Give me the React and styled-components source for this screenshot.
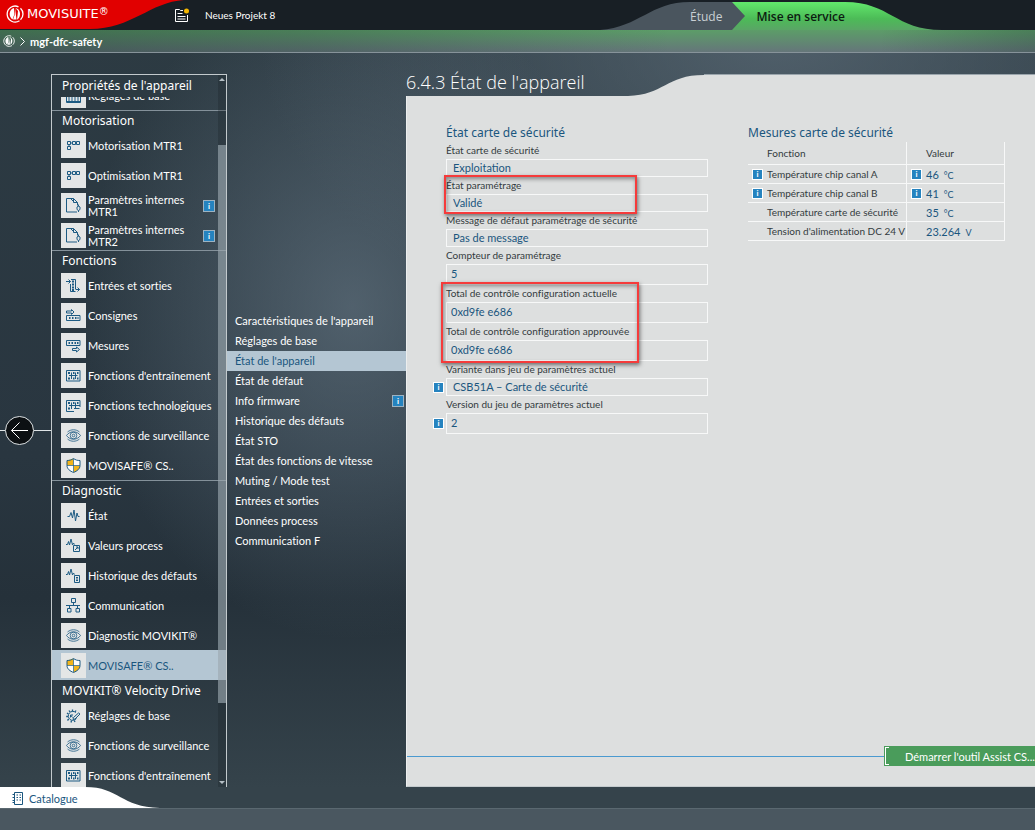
import React, { useState } from "react";
import styled, { createGlobalStyle, css } from "styled-components";

const GlobalStyle = createGlobalStyle`
  *,
  *::before,
  *::after {
    box-sizing: border-box;
  }

  body {
    margin: 0;
    font-family: Lato, "Open Sans", sans-serif;
    font-size: 11px;
    font-variant-ligatures: none;
    color: #ffffff;
    background: #2b3840;
  }

  button,
  input {
    font-family: inherit;
  }
`;

const Page = styled.div`
  display: flex;
  flex-direction: column;
  height: 100vh;
  overflow: hidden;
  background:
    radial-gradient(ellipse 26% 40% at 34% 37%, rgba(112, 130, 144, 0.55), transparent),
    radial-gradient(ellipse 50% 40% at 75% 4%, rgba(92, 108, 120, 0.75), transparent),
    linear-gradient(180deg, #2d3b43 0%, #293640 55%, #25313a 72%, #35434b 95%);
`;

const TopBar = styled.header`
  display: flex;
  align-items: center;
  height: 30px;
  background: #181f25;
`;

const Brand = styled.div`
  position: relative;
  display: flex;
  align-items: center;
  gap: 3px;
  width: 174px;
  height: 30px;
  padding-left: 6px;
  padding-bottom: 3px;
`;

const BrandShape = styled.svg`
  position: absolute;
  top: 0;
  left: 0;
`;

const BrandName = styled.span`
  position: relative;
  font-family: "DejaVu Sans", sans-serif;
  font-size: 13px;
  line-height: 16px;

  sup {
    font-size: 10px;
    line-height: 1;
    vertical-align: 3px;
  }
`;

const BrandMark = styled.svg`
  position: relative;
  flex: none;
`;

const Project = styled.div`
  display: flex;
  align-items: center;
  gap: 15px;
  font-size: 10px;
`;

const Phases = styled.nav`
  position: relative;
  display: flex;
  align-items: center;
  width: 435px;
  height: 30px;
  margin-left: auto;
  padding: 2px 0 0 90px;
`;

const PhaseShape = styled.svg`
  position: absolute;
  top: 0;
  left: 0;
`;

const Phase = styled.button`
  position: relative;
  padding: 0;
  margin-right: 34px;
  border: none;
  background: none;
  font-family: "Open Sans", "Noto Sans", sans-serif;
  font-size: 12px;
  font-weight: ${(props) => (props.$active ? 600 : 400)};
  color: ${(props) => (props.$active ? "#0c1a10" : "#c9d0d4")};
  cursor: pointer;
`;

const PathBar = styled.div`
  display: flex;
  align-items: center;
  gap: 5px;
  height: 23px;
  padding-left: 3px;
  border-bottom: 1px solid #87939a;
  font-weight: 700;
  background:
    linear-gradient(90deg, rgba(20, 40, 40, 0.4) 0%, rgba(20, 40, 40, 0.25) 30%, transparent 65%, transparent 85%, rgba(20, 40, 40, 0.25) 100%),
    linear-gradient(180deg, #5c9d68 0%, #65767a 100%);
`;

const Main = styled.main`
  display: flex;
  flex: 1;
  min-height: 0;
  padding-top: 21px;
`;

const BackColumn = styled.div`
  display: flex;
  align-items: center;
  width: 51px;
  flex: none;

  &::before,
  &::after {
    content: "";
    height: 1px;
    background: #dfe4e6;
  }

  &::before {
    width: 5px;
  }

  &::after {
    flex: 1;
  }
`;

const BackButton = styled.button`
  display: flex;
  align-items: center;
  justify-content: center;
  width: 29px;
  height: 29px;
  padding: 0;
  border: 1px solid #dfe4e6;
  border-radius: 50%;
  background: #0c1013;
  cursor: pointer;
`;

const DeviceNav = styled.nav`
  position: relative;
  display: flex;
  flex-direction: column;
  flex: none;
  width: 176px;
  border: 1px solid #c3cacd;
  border-bottom: none;
`;

const DeviceTitle = styled.h2`
  flex: none;
  margin: 0;
  padding-left: 10px;
  font-family: "Noto Sans", sans-serif;
  font-size: 12px;
  font-weight: 400;
  line-height: 22px;
`;

const NavScroll = styled.div`
  flex: 1;
  min-height: 0;
  overflow: hidden;
`;

const NavList = styled.div`
  margin-top: -17px;
`;

const SectionTitle = styled.h3`
  margin: 0;
  padding-left: 10px;
  border-top: 1px solid ${(props) => (props.$plain ? "transparent" : "#84919a")};
  font-family: "Noto Sans", sans-serif;
  font-size: 12px;
  font-weight: 400;
  line-height: 19px;
`;

const selected = css`
  background: #b4c6d3;
  color: #1a567e;
`;

const NavItem = styled.a`
  display: flex;
  align-items: center;
  gap: 2px;
  height: 30px;
  padding: 1px 11px 0 9px;
  font-size: 11px;
  line-height: 12px;
  color: #ffffff;
  text-decoration: none;
  ${(props) => props.$active && selected}
`;

const NavLabel = styled.span`
  flex: 1;
  white-space: ${(props) => (props.$wrap ? "normal" : "nowrap")};
`;

const IconTile = styled.svg`
  flex: none;
  width: 25px;
  height: 25px;
  background: #e4e6e6;
  fill: none;
  stroke: #1d5b83;
`;

const ScrollTrack = styled.div`
  position: absolute;
  top: 0;
  right: 0;
  bottom: 0;
  display: flex;
  flex-direction: column;
  align-items: center;
  width: 8px;
  padding: 3px 0;
  background: rgba(18, 26, 32, 0.25);
`;

const ScrollThumb = styled.div`
  width: 8px;
  margin-top: 64px;
  height: 558px;
  background: rgba(190, 203, 212, 0.5);
`;

const Arrow = styled.div`
  border: 3px solid transparent;
  ${(props) =>
    props.$down
      ? "border-top-color: #b5bfc5; border-bottom: none; margin-top: auto;"
      : "border-bottom-color: #b5bfc5; border-top: none;"}
`;

const SubMenu = styled.nav`
  display: flex;
  flex-direction: column;
  justify-content: center;
  flex: none;
  width: 179px;
`;

const SubItem = styled.a`
  display: flex;
  align-items: center;
  justify-content: space-between;
  height: 20px;
  padding: 0 2px 0 8px;
  font-size: 11px;
  color: #ffffff;
  text-decoration: none;
  ${(props) => props.$active && selected}
`;

const InfoIcon = styled.span`
  flex: none;
  width: ${(props) => props.$size || 12}px;
  height: ${(props) => props.$size || 12}px;
  border: 1px solid ${(props) => (props.$light ? "#ffffff" : "#9db3c2")};
  background: #2583bf;
  font-size: 8px;
  font-weight: 700;
  line-height: ${(props) => (props.$size || 12) - 2}px;
  text-align: center;
  color: #ffffff;
`;

const Content = styled.section`
  display: flex;
  flex-direction: column;
  flex: 1;
  min-width: 0;
`;

const ContentTop = styled.div`
  display: flex;
  height: 22px;
`;

const ContentTitle = styled.h1`
  width: 222px;
  margin: 0;
  font-family: "Open Sans", "Noto Sans", sans-serif;
  font-size: 18px;
  font-weight: 300;
  line-height: 16px;
  white-space: nowrap;
`;

const TopFill = styled.div`
  flex: 1;
  border-top: 1px solid #9aa5ac;
  background: #dddfdf;
`;

const Panel = styled.div`
  display: flex;
  flex-direction: column;
  justify-content: space-between;
  flex: 1;
  padding-bottom: 20px;
  border-left: 1px solid #eceeee;
  border-bottom: 1px solid #c3cacd;
  background: #dddfdf;
`;

const Columns = styled.div`
  display: flex;
  gap: 40px;
  padding: 27px 30px 0 39px;
`;

const GroupTitle = styled.h2`
  margin: 0;
  font-family: "Noto Sans", sans-serif;
  font-size: 12px;
  font-weight: 400;
  line-height: 19px;
  color: #1a567e;
`;

const FieldColumn = styled.div`
  flex: none;
  width: 262px;
`;

const Field = styled.div`
  position: relative;

  label {
    display: block;
    font-size: 10px;
    line-height: 17px;
    color: #333b40;
    white-space: nowrap;
  }

  input {
    display: block;
    width: 100%;
    height: ${(props) => (props.$numeric ? 21 : 18)}px;
    padding: 0 ${(props) => (props.$numeric ? 4 : 6)}px 2px;
    border: 1px solid #f7f8f8;
    border-radius: 0;
    outline: none;
    background: transparent;
    font-size: 11px;
    color: #1a567e;
  }

  ${InfoIcon} {
    position: absolute;
    left: -13px;
    bottom: ${(props) => (props.$numeric ? 5 : 3)}px;
  }
`;

const Marked = styled.div`
  position: relative;

  &::after {
    content: "";
    position: absolute;
    top: -${(props) => props.$pad}px;
    bottom: -2px;
    left: -${(props) => props.$left}px;
    width: ${(props) => props.$width}px;
    border: 2px solid #f53b3b;
    box-shadow:
      1px 2px 4px rgba(0, 0, 0, 0.5),
      inset 1px 2px 4px rgba(0, 0, 0, 0.4);
    pointer-events: none;
    z-index: 1;
  }
`;

const MeasureColumn = styled.div`
  flex: none;
  width: 257px;
`;

const MeasureTable = styled.table`
  width: 100%;
  border-collapse: separate;
  border-spacing: 0;
  table-layout: fixed;
  font-size: 10px;
  color: #333b40;

  th,
  td {
    height: 19px;
    padding: 0;
    border-right: 1px solid #f7f8f8;
    border-bottom: 1px solid #f7f8f8;
    font-weight: 400;
    text-align: left;
    white-space: nowrap;
  }

  th:first-child {
    width: 159px;
  }

  thead th {
    height: 23px;
    padding-left: 19px;
  }
`;

const Cell = styled.div`
  display: flex;
  align-items: center;
  height: 18px;
  padding-left: 4px;
`;

const InfoSlot = styled.span`
  display: flex;
  flex: none;
  width: 15px;
`;

const Value = styled.span`
  font-size: 11px;
  color: #1a567e;

  small {
    margin-left: 5px;
    font-size: 9px;
  }
`;

const Actions = styled.div`
  display: flex;
  align-items: center;

  &::before {
    content: "";
    flex: 1;
    height: 1px;
    background: #4b9ad0;
  }
`;

const AssistButton = styled.button`
  position: relative;
  width: 151px;
  height: 20px;
  padding: 0 0 0 21px;
  border: none;
  background: #4a9c5b;
  font-size: 11px;
  text-align: left;
  white-space: nowrap;
  color: #ffffff;
  cursor: pointer;

  &::before {
    content: "";
    position: absolute;
    top: 1px;
    bottom: 1px;
    left: 1px;
    width: 4px;
    border: 1px solid #ffffff;
    border-right: none;
  }
`;

const CatalogBar = styled.div`
  height: 21px;
`;

const CatalogTab = styled.button`
  position: relative;
  display: flex;
  align-items: center;
  gap: 5px;
  width: 160px;
  height: 21px;
  padding: 2px 0 0 12px;
  border: none;
  background: none;
  font-size: 11px;
  color: #1a567e;
  cursor: pointer;

  svg,
  span {
    position: relative;
  }

  svg:first-child {
    position: absolute;
    top: 0;
    left: 0;
  }
`;

const StatusBar = styled.footer`
  height: 22px;
  border-top: 1px solid #5a6870;
  background: #4a5760;
`;

const icons = {
  base: <path d="M5.500 8.500h14v11h-14z M8 14v4 M11 14v4 M14 14v4 M17 14v4 M6 18.500h13" />,
  motor: (
    <path d="M6.500 8.500h3v3h-3z M11.500 8.500h3v3h-3z M15.500 8.500h3v3h-3z M6.500 13.500h3v3h-3z M8 11.500v2 M9.500 10h2" />
  ),
  file: (
    <>
      <path d="M12.500 5.500h-7v13.500h10.500 M12.500 5.500l4 4v3 M12.500 5.500v4h4 M9.500 5.500l3 3" />
      <path d="M17.500 11.500v2 M16 14l1.500-1 1.500 1v2.500l-1.500 1-1.500-1z M17.500 17.500v1.500" />
    </>
  ),
  io: (
    <>
      <path d="M5 8.500h4.500 M7.500 6.500l2 2-2 2 M10 6.500h4.500v9.500 M9.500 11v7.500h5 M14.500 16.500h4 M16.500 14.500l2 2-2 2" />
      <path d="M11 8.500h2 M11 11.500h2 M11 14.500h2 M11 17h2" strokeWidth="2" />
    </>
  ),
  setpoint: (
    <>
      <path d="M5.500 8h5V6.500l2.500 2.500-2.500 2.500V10h-5z M5.500 12.500h13.500v5h-13.500z" />
      <path d="M8 15h1.500 M11 15h1.500 M14 15h1.500 M16.500 15h1" strokeWidth="2" />
    </>
  ),
  measure: (
    <>
      <path d="M5.500 7.500h13.500v5h-13.500z M11.500 15.500h4V14l3 2.500-3 2.500v-1.500h-4z" />
      <path d="M7.500 10h1.500 M10.500 10h1.500 M13.500 10h1.500 M16 10h1.500" strokeWidth="2" />
    </>
  ),
  drive: (
    <>
      <path d="M5.500 7.500h13.500v10.500h-13.500z M8 12.500h8.500 M10.500 9.500v6.500 M14.500 9.500v6.500" />
      <path d="M7 10h2 M7 15.500h2 M12 10h1.500 M12 15.500h1.500 M16 10h1.500 M16 15.500h1.500" strokeWidth="2" />
    </>
  ),
  techno: (
    <>
      <path d="M13 18.500H5.500v-11h13.500v6.500 M8 12.500h11 M10.500 9.500v6.500 M14.500 9.500v6 M13 15.500h5.500" />
      <path d="M7 10h2 M7 15.500h2 M12 10h1.500 M16 10h1.500" strokeWidth="2" />
    </>
  ),
  eye: (
    <g strokeWidth="0.800">
      <path d="M5.500 12.500c3.500-5 10.500-5 14 0c-3.500 5-10.500 5-14 0z M6.500 9c3.500-3 8.500-3 12 0 M6.500 16c3.500 3 8.500 3 12 0" />
      <circle cx="12.500" cy="12.500" r="3.300" />
      <circle cx="12.500" cy="12.500" r="1.300" />
    </g>
  ),
  shield: (
    <>
      <path d="M12.500 5.500L6 7.500v5h6.500z M12.500 12.500H19c0 3.500-3 5.500-6.500 7z" fill="#f3b51b" stroke="none" />
      <path d="M12.500 5.500L19 7.500v5h-6.500z M12.500 12.500H6c0 3.500 3 5.500 6.500 7z" fill="#ffffff" stroke="none" />
      <path d="M12.500 5.500c-2 1.500-4 2-6.500 2v5c0 3.500 3 5.500 6.500 7c3.500-1.500 6.500-3.500 6.500-7v-5c-2.500 0-4.500-.5-6.500-2z" />
      <path d="M12.500 6v13 M6 12.500h13" strokeWidth="0.700" />
    </>
  ),
  pulse: <path d="M6.500 13.500h2l1.500-4 1.500 5.500 1.500-8 1.500 11 1.500-8 1 3.500h1.500" />,
  process: (
    <>
      <path d="M5 11.500h1.500l1-3 1 3.500 1.500-6 1.500 6 1-2 1 1.500" />
      <path d="M12.500 12.500h6v6h-6z M14 17l3-3 M15 14h2v2" />
    </>
  ),
  history: (
    <>
      <path d="M5 11.500h1.500l1-3 1 3.500 1.500-6 1.500 6 1-2 1 1.500" />
      <path d="M13.500 12.500h5v7h-5z M15 14.500h2 M15 16h2 M15 17.500h2" />
    </>
  ),
  network: (
    <path d="M10.500 5.500h4v4h-4z M6.500 15.500h3.500v3.500h-3.500z M15 15.500h3.500v3.500H15z M12.500 9.500v3 M5 12.500h14 M8.500 12.500v3 M16.500 12.500v3" />
  ),
  gear: (
    <>
      <path d="M14.800 9.500A4.500 4.500 0 1 0 15.500 15.500" />
      <path d="M11.500 6.500v2 M6 10l1.300 1 M5.200 13.500h1.800 M6.500 17.500l1.200-1.500 M10 19.500l.5-2 M14 19l-.7-1.500 M8 7.500l1 1.500 M15 7.500l-1 1.500" strokeWidth="1.300" />
      <path d="M12.500 14.500l5-4.500 1.500 1-5 5-2 .5z" fill="#e4e6e6" />
      <path d="M9.500 12l2 2.500 M9.500 14.500v-2.500h2.500" />
    </>
  ),
};

const sections = [
  {
    title: "Motorisation",
    items: [
      { label: "Motorisation MTR1", icon: "motor" },
      { label: "Optimisation MTR1", icon: "motor" },
      { label: "Paramètres internes MTR1", icon: "file", info: true },
      { label: "Paramètres internes MTR2", icon: "file", info: true },
    ],
  },
  {
    title: "Fonctions",
    items: [
      { label: "Entrées et sorties", icon: "io" },
      { label: "Consignes", icon: "setpoint" },
      { label: "Mesures", icon: "measure" },
      { label: "Fonctions d'entraînement", icon: "drive" },
      { label: "Fonctions technologiques", icon: "techno" },
      { label: "Fonctions de surveillance", icon: "eye" },
      { label: "MOVISAFE® CS..", icon: "shield" },
    ],
  },
  {
    title: "Diagnostic",
    items: [
      { label: "État", icon: "pulse" },
      { label: "Valeurs process", icon: "process" },
      { label: "Historique des défauts", icon: "history" },
      { label: "Communication", icon: "network" },
      { label: "Diagnostic MOVIKIT®", icon: "eye" },
      { label: "MOVISAFE® CS..", icon: "shield", active: true },
    ],
  },
  {
    title: "MOVIKIT® Velocity Drive",
    plain: true,
    items: [
      { label: "Réglages de base", icon: "gear" },
      { label: "Fonctions de surveillance", icon: "eye" },
      { label: "Fonctions d'entraînement", icon: "drive" },
    ],
  },
];

const subItems = [
  "Caractéristiques de l'appareil",
  "Réglages de base",
  "État de l'appareil",
  "État de défaut",
  "Info firmware",
  "Historique des défauts",
  "État STO",
  "État des fonctions de vitesse",
  "Muting / Mode test",
  "Entrées et sorties",
  "Données process",
  "Communication F",
];

const measures = [
  { label: "Température chip canal A", value: "46", unit: "°C", info: true },
  { label: "Température chip canal B", value: "41", unit: "°C", info: true },
  { label: "Température carte de sécurité", value: "35", unit: "°C" },
  { label: "Tension d'alimentation DC 24 V", value: "23.264", unit: "V" },
];

const Mark = ({ size }) => (
  <BrandMark width={size} height={size} viewBox="0 0 18 18" fill="none" stroke="#ffffff">
    <path d="M12.500 1.800A8 8 0 1 0 13.500 15.800" strokeWidth="1.300" />
    <path d="M14.500 3.200a8 8 0 0 1 0 11.600" strokeWidth="1.300" />
    <path d="M8 3C2.500 4.500 2.500 12 6.500 14.500L8.500 9z M9.500 3C15 4 15.500 12 11 14.800L12 6z" fill="#ffffff" stroke="none" />
    <path d="M9 3v6l-2 5.500h3.500z" fill="#ffffff" stroke="none" />
  </BrandMark>
);

const Item = ({ item }) => (
  <NavItem href="#" $active={item.active}>
    <IconTile viewBox="0 0 25 25" aria-hidden="true">
      {icons[item.icon]}
    </IconTile>
    <NavLabel $wrap={item.info}>{item.label}</NavLabel>
    {item.info && <InfoIcon>i</InfoIcon>}
  </NavItem>
);

const ValueField = ({ id, label, value, numeric, info }) => (
  <Field $numeric={numeric}>
    <label htmlFor={id}>{label}</label>
    <input id={id} type="text" value={value} readOnly />
    {info && (
      <InfoIcon $size={11} $light>
        i
      </InfoIcon>
    )}
  </Field>
);

const InfoCell = ({ info, children }) => (
  <Cell>
    <InfoSlot>
      {info && (
        <InfoIcon $size={11} $light>
          i
        </InfoIcon>
      )}
    </InfoSlot>
    {children}
  </Cell>
);

const App = () => {
  const [current, setCurrent] = useState("État de l'appareil");

  return (
    <Page>
      <GlobalStyle />
      <TopBar>
        <Brand>
          <BrandShape width="190" height="30" viewBox="0 0 190 30">
            <path d="M0 0H184C150 2 132 29 90 29H0z" fill="#e10000" />
          </BrandShape>
          <Mark size={18} />
          <BrandName>
            MOVISUITE<sup>®</sup>
          </BrandName>
        </Brand>
        <Project>
          <svg width="16" height="15" viewBox="0 0 16 15" fill="none" stroke="#ffffff">
            <path d="M9 2.500H6.500l-1-1H1.500v12h12V7 M3.500 5.500h5 M3.500 8.500h8 M3.500 11h8" />
            <circle cx="12.500" cy="3" r="2.500" fill="#f6b800" stroke="none" />
          </svg>
          <span>Neues Projekt 8</span>
        </Project>
        <Phases>
          <PhaseShape width="435" height="30" viewBox="0 0 435 30">
            <defs>
              <linearGradient id="phase" x1="0" y1="0" x2="0" y2="1">
                <stop offset="0" stopColor="#62e86c" />
                <stop offset="0.600" stopColor="#4cbb57" />
                <stop offset="1" stopColor="#5aa566" />
              </linearGradient>
            </defs>
            <path d="M131 2H245C290 2 295 30 342 30H131z" fill="url(#phase)" />
            <path d="M0 30C40 27 50 2 90 2H132L145 16L132 30z" fill="#4a555e" />
          </PhaseShape>
          <Phase>Étude</Phase>
          <Phase $active>Mise en service</Phase>
        </Phases>
      </TopBar>
      <PathBar>
        <Mark size={12} />
        <svg width="5" height="9" viewBox="0 0 5 9" fill="none" stroke="#ffffff">
          <path d="M0.500 0.500l4 4-4 4" />
        </svg>
        <span>mgf-dfc-safety</span>
      </PathBar>
      <Main>
        <BackColumn>
          <BackButton aria-label="Retour">
            <svg width="19" height="19" viewBox="0 0 19 19" fill="none" stroke="#ffffff">
              <path d="M18 9.500H1.500 M9.500 1.500l-8 8 8 8" />
            </svg>
          </BackButton>
        </BackColumn>
        <DeviceNav>
          <DeviceTitle>Propriétés de l'appareil</DeviceTitle>
          <NavScroll>
            <NavList>
              <Item item={{ label: "Réglages de base", icon: "base" }} />
              {sections.map((section) => (
                <React.Fragment key={section.title}>
                  <SectionTitle $plain={section.plain}>{section.title}</SectionTitle>
                  {section.items.map((item) => (
                    <Item key={item.label} item={item} />
                  ))}
                </React.Fragment>
              ))}
            </NavList>
          </NavScroll>
          <ScrollTrack>
            <Arrow />
            <ScrollThumb />
            <Arrow $down />
          </ScrollTrack>
        </DeviceNav>
        <SubMenu>
          {subItems.map((label) => (
            <SubItem
              key={label}
              href="#"
              $active={label === current}
              onClick={() => setCurrent(label)}
            >
              {label}
              {label === "Info firmware" && <InfoIcon>i</InfoIcon>}
            </SubItem>
          ))}
        </SubMenu>
        <Content>
          <ContentTop>
            <ContentTitle>6.4.3 État de l'appareil</ContentTitle>
            <svg width="76" height="22" viewBox="0 0 76 22">
              <path d="M0 22C36 21 38 1 76 1V22z" fill="#dddfdf" />
            </svg>
            <TopFill />
          </ContentTop>
          <Panel>
            <Columns>
              <FieldColumn>
                <GroupTitle>État carte de sécurité</GroupTitle>
                <ValueField id="card-state" label="État carte de sécurité" value="Exploitation" />
                <Marked $pad={2} $left={2} $width={193}>
                  <ValueField id="param-state" label="État paramétrage" value="Validé" />
                </Marked>
                <ValueField
                  id="param-error"
                  label="Message de défaut paramétrage de sécurité"
                  value="Pas de message"
                />
                <ValueField id="param-count" label="Compteur de paramétrage" value="5" numeric />
                <Marked $pad={3} $left={5} $width={198}>
                  <ValueField
                    id="sum-current"
                    label="Total de contrôle configuration actuelle"
                    value="0xd9fe e686"
                    numeric
                  />
                  <ValueField
                    id="sum-approved"
                    label="Total de contrôle configuration approuvée"
                    value="0xd9fe e686"
                    numeric
                  />
                </Marked>
                <ValueField
                  id="variant"
                  label="Variante dans jeu de paramètres actuel"
                  value="CSB51A – Carte de sécurité"
                  info
                />
                <ValueField
                  id="version"
                  label="Version du jeu de paramètres actuel"
                  value="2"
                  numeric
                  info
                />
              </FieldColumn>
              <MeasureColumn>
                <GroupTitle>Mesures carte de sécurité</GroupTitle>
                <MeasureTable>
                  <thead>
                    <tr>
                      <th>Fonction</th>
                      <th>Valeur</th>
                    </tr>
                  </thead>
                  <tbody>
                    {measures.map((row) => (
                      <tr key={row.label}>
                        <td>
                          <InfoCell info={row.info}>{row.label}</InfoCell>
                        </td>
                        <td>
                          <InfoCell info={row.info}>
                            <Value>
                              {row.value}
                              <small>{row.unit}</small>
                            </Value>
                          </InfoCell>
                        </td>
                      </tr>
                    ))}
                  </tbody>
                </MeasureTable>
              </MeasureColumn>
            </Columns>
            <Actions>
              <AssistButton>Démarrer l'outil Assist CS...</AssistButton>
            </Actions>
          </Panel>
        </Content>
      </Main>
      <CatalogBar>
        <CatalogTab>
          <svg width="160" height="21" viewBox="0 0 160 21">
            <path d="M0 0H85C120 0 120 20 160 21H0z" fill="#ffffff" />
          </svg>
          <svg width="12" height="13" viewBox="0 0 12 13" fill="none" stroke="#1a567e">
            <path d="M2.500 0.500h8v12h-8z M0.500 2.500h2 M0.500 5.500h2 M0.500 8.500h2 M0.500 10.500h2 M4.500 3h1.500 M7.500 3h1.500 M4.500 5.500h1.500 M7.500 5.500h1.500 M4.500 8h1.500 M7.500 8h1.500" />
          </svg>
          <span>Catalogue</span>
        </CatalogTab>
      </CatalogBar>
      <StatusBar />
    </Page>
  );
};

export default App;
